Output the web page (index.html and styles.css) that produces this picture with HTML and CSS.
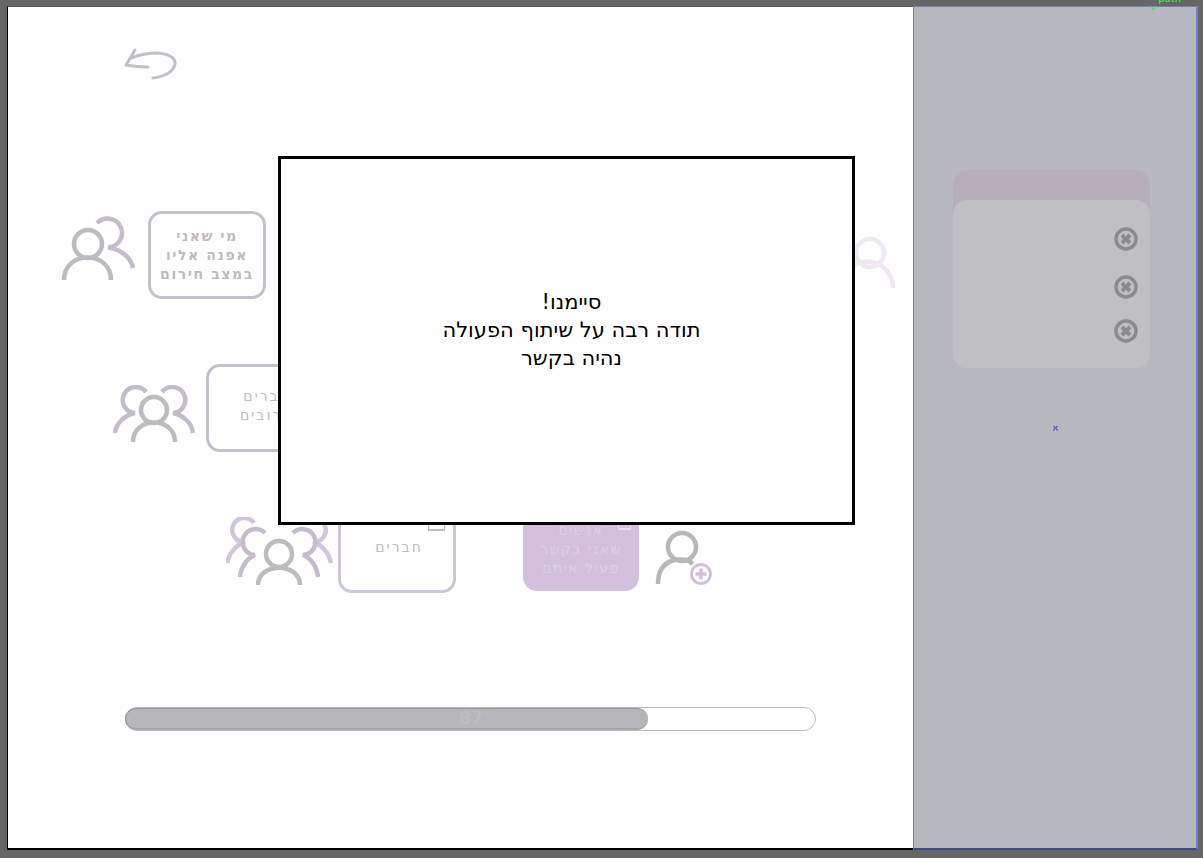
FILE: index.html
```html
<!DOCTYPE html>
<html lang="he">
<head>
<meta charset="UTF-8">
<title>Document</title>
<link rel="stylesheet" href="styles.css">
</head>
<body>
<div class="stage">
	<div class="main">
		<svg class="back" width="54" height="34" viewBox="0 0 54 34">
			<path d="M11 3 L2 18 Q12 20 24 20 M7 11 Q20 6 34 6 Q52 8 51 17 Q49 28 29 31"/>
		</svg>

		<div class="row row1">
			<svg class="people" width="76" height="67" viewBox="0 0 76 67">
				<circle cx="28" cy="29" r="14"/>
				<path d="M4 65 C4 35 51 35 51 65"/>
				<path class="soft" d="M37 8 A14.5 14.5 0 1 1 48 32.5 C60 34 71 42 73 53"/>
			</svg>
			<div class="box box-bold" dir="rtl"><b>מי שאני<br>אפנה אליו<br>במצב חירום</b></div>
			<svg class="faded" width="42" height="56" viewBox="0 0 42 56">
				<circle cx="16" cy="19" r="14"/>
				<path d="M-8 48 C-8 20 38 20 39 54"/>
			</svg>
		</div>

		<div class="row row2">
			<svg class="people" width="84" height="62" viewBox="0 0 84 62">
				<path class="soft" d="M33 7 A13 13 0 1 0 22 28 C12 30 3 38 2 48"/>
				<path class="soft" d="M49 7 A13 13 0 1 1 60 28 C70 30 79 38 80 48"/>
				<circle cx="41" cy="25" r="13"/>
				<path d="M20 57 C20 31 62 31 62 57"/>
			</svg>
			<div class="box" dir="rtl">חברים<br>קרובים</div>
		</div>

		<div class="row row3">
			<svg class="people" width="108" height="72" viewBox="0 0 108 72">
				<path class="pale" d="M28 6 A12 12 0 1 0 19 25 C10 28 3 36 1 46"/>
				<path class="pale" d="M78 6 A12 12 0 1 1 87 25 C96 28 103 36 105 46"/>
				<path class="soft" d="M39 16 A13 13 0 1 0 29 38 C21 41 15 50 14 60"/>
				<path class="soft" d="M67 16 A13 13 0 1 1 77 38 C85 41 91 50 92 60"/>
				<circle cx="53" cy="37" r="13"/>
				<path d="M32 68 C32 45 74 45 74 68"/>
			</svg>
			<div class="box box-mini" dir="rtl"><span class="mini"></span>חברים</div>
			<div class="box box-fill" dir="rtl"><span class="mini mini-light"></span>אנשים<br>שאני בקשר<br>פעיל איתם</div>
			<svg class="adduser" width="60" height="56" viewBox="0 0 60 56">
				<circle cx="27" cy="17" r="14"/>
				<path d="M3 54 C3 26 30 26 38 34"/>
				<circle class="plus-ring" cx="46" cy="44" r="9.5"/>
				<path class="plus" d="M46 38.5 V49.5 M40.5 44 H51.5"/>
			</svg>
		</div>

		<div class="progress">
			<div class="progress-fill" style="width:523px"></div>
			<span class="progress-label">87<i>%</i></span>
		</div>

		<div class="modal">
			<p class="modal-text" dir="rtl">סיימנו!<br>תודה רבה על שיתוף הפעולה<br>נהיה בקשר</p>
		</div>
	</div>

	<div class="side">
		<span class="tag">path</span>
		<div class="cards">
			<div class="card-back"></div>
			<div class="card">
				<svg class="remove" width="24" height="24" viewBox="0 0 24 24"><circle cx="12" cy="12" r="10"/><path d="M8 8 L16 16 M16 8 L8 16"/></svg>
				<svg class="remove" width="24" height="24" viewBox="0 0 24 24"><circle cx="12" cy="12" r="10"/><path d="M8 8 L16 16 M16 8 L8 16"/></svg>
				<svg class="remove" width="24" height="24" viewBox="0 0 24 24"><circle cx="12" cy="12" r="10"/><path d="M8 8 L16 16 M16 8 L8 16"/></svg>
			</div>
		</div>
		<span class="marker"></span>
	</div>
</div>
</body>
</html>
```

FILE: styles.css
```css
* {margin:0; padding:0; box-sizing:border-box;}
html, body {height:100%;}
body {background:#666; overflow:hidden; font-family:"DejaVu Sans", "Noto Sans", sans-serif;}

.stage {display:flex; width:1191px; height:844px; margin:6px 0 0 7px; border:1px solid #000; border-top-color:#555; border-right:0; border-bottom-width:2px;}

.main {position:relative; flex:1; background:#fff; min-width:0;}
svg {display:block; flex:none; fill:none;}

.back {margin:40px 0 0 116px; stroke:#c3bec8; stroke-width:3; stroke-linecap:round; stroke-linejoin:round;}

.row {display:flex; align-items:center; height:88px;}
.row1 {margin:130px 0 0 52px; gap:12px;}
.row2 {margin:65px 0 0 105px; gap:9px;}
.row3 {margin:53px 0 0 218px;}

.people {stroke:#bcbcc0; stroke-width:4.5;}
.people .soft {stroke:#c4bccb;}
.people .pale {stroke:#d0c5da;}
.row1 .people {margin-bottom:14px;}
.row2 .people {margin-top:16px;}
.row3 .people {margin-top:8px;}
.faded {margin:13px 0 0 576px; stroke:#efe8f3; stroke-width:4.5; overflow:visible;}

.box {position:relative; width:118px; height:88px; display:flex; align-items:center; justify-content:center; padding:0 0 4px 4px; text-align:center; border:3px solid #c6bfcd; border-radius:14px; color:#bfbcc4; font-size:14px; line-height:19px; letter-spacing:2px;}
.box-bold {padding:0;}
.box b {color:#bdbac2; letter-spacing:1.6px;}
.box-mini {margin-left:4px; border-color:#cfc5d9;}
.box-fill {width:116px; margin-left:67px; height:86px; margin-top:-2px; border:0; background:#d3c0dd; color:#dcd0e4; padding:2px 0 0; letter-spacing:1.5px;}

.mini {position:absolute; top:15px; right:8px; width:17px; height:8px; border:1px solid #bbb; border-bottom-width:2px;}
.mini-light {top:18px; right:8px; width:13px; height:7px; border-color:#e6ddec;}

.adduser {margin:18px 0 0 16px; stroke:#b8b8bc; stroke-width:4.5;}
.adduser .plus-ring {stroke:#d3c0dd; stroke-width:3; fill:#fff;}
.adduser .plus {stroke:#d3c0dd; stroke-width:3.5;}

.progress {position:relative; width:691px; height:24px; margin:114px 0 0 117px; background:#fff; border:1px solid #bbb; border-radius:12px;}
.progress-fill {height:22px; background:#b6b6bb; border:1px solid #999; border-bottom:2px solid #a5a5aa; border-right:0; border-radius:11px; margin:-0.5px 0 0 -1px;}
.progress-label {position:absolute; top:-1px; left:333px; color:#bfbfc3; font-size:18px; line-height:22px; letter-spacing:1px;}
.progress-label i {font-style:normal; color:#babac0;}

.modal {position:absolute; left:270px; top:149px; width:577px; height:369px; display:flex; align-items:center; justify-content:center; padding:0 0 22px 10px; background:#fff; border:3px solid #000;}
.modal-text {color:#000; font-size:21px; line-height:28px; text-align:center;}

.side {position:relative; flex:none; width:285px; margin:-1px 0 -2px; background:#b8b9be; border:1px solid #6f82c6; border-right-width:2px; border-bottom:2px solid #3b4a8e;}
.tag {position:absolute; top:-14px; right:15px; color:#44ee55; font-size:10px; line-height:12px;}
.tag::before {content:""; position:absolute; left:-7px; top:11px; width:4px; height:4px; border:solid #44dd66; border-width:0 0 1px 1px; transform:rotate(-45deg);}

.cards {margin:163px 0 0 39px; width:197px;}
.card-back {height:46px; margin-bottom:-16px; background:#b8aeb9; border-radius:14px 14px 0 0;}
.card {display:flex; flex-direction:column; align-items:flex-end; height:168px; padding:27px 12px 0 0; background:#c0bfc3; border-radius:14px;}
.remove {margin-bottom:24px; stroke:#8b8b8f; stroke-width:3.5;}
.remove:nth-child(2) {margin-bottom:20px;}
.remove path {stroke-width:4;}

.marker {position:absolute; left:139px; top:419px; width:5px; height:5px; background:linear-gradient(45deg, transparent 40%, #5a6fd8 40%, #5a6fd8 60%, transparent 60%), linear-gradient(-45deg, transparent 40%, #5a6fd8 40%, #5a6fd8 60%, transparent 60%);}
```
